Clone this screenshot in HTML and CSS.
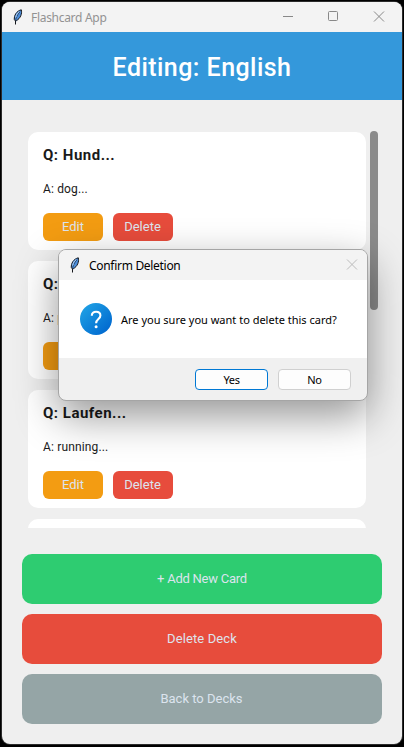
FILE: index.html
```html
<!DOCTYPE html>
<html lang="en">
<head>
<meta charset="utf-8">
<title>Flashcard App</title>
<link rel="stylesheet" href="styles.css">
</head>
<body>
<svg width="0" height="0" class="defs">
  <symbol id="feather" viewBox="0 0 10 16">
    <path d="M2.500 15.500V12L1.300 10.500C1 6.500 3.500 2 8.300.8 9.300 4.500 7.500 9.500 3.300 11.700" fill="#4d8fdc" stroke="#15171c" stroke-width="1"/>
    <path d="M2.600 12C3 8.500 4.500 5.500 7 2.700" fill="none" stroke="#15171c" stroke-width=".6"/>
    <path d="M2.800 8.500C3 6 4.500 3.600 6.200 2.600" fill="none" stroke="#b8d8fa" stroke-width="1"/>
  </symbol>
</svg>
<div class="window">
  <div class="titlebar">
    <svg class="feather"><use href="#feather"/></svg>
    <span class="caption">Flashcard App</span>
    <svg class="controls" width="103" height="12" viewBox="0 0 103 12" fill="none" stroke="#888">
      <path d="M0 5.500H10"/><rect x="45.500" y=".5" width="9" height="9" rx="1"/><path d="M91 .5l10 10M101 .5L91 10.500"/>
    </svg>
  </div>
  <header class="header"><h1>Editing: English</h1></header>
  <main class="list">
    <div class="cards">
      <article class="card">
        <h2>Q: Hund...</h2><p>A: dog...</p>
        <div class="actions"><button class="edit">Edit</button><button class="delete">Delete</button></div>
      </article>
      <article class="card">
        <h2>Q:</h2><p>A: p</p>
        <div class="actions"><button class="edit">Edit</button><button class="delete">Delete</button></div>
      </article>
      <article class="card">
        <h2>Q: Laufen...</h2><p>A: running...</p>
        <div class="actions"><button class="edit">Edit</button><button class="delete">Delete</button></div>
      </article>
      <article class="card"></article>
    </div>
    <div class="thumb"></div>
  </main>
  <footer class="footer">
    <button class="add">+ Add New Card</button>
    <button class="delete">Delete Deck</button>
    <button class="back">Back to Decks</button>
  </footer>
  <div class="dialog">
    <div class="dialog-title">
      <svg class="feather"><use href="#feather"/></svg>
      <span class="caption">Confirm Deletion</span>
      <svg class="close" width="12" height="12" viewBox="0 0 12 12" fill="none" stroke="#bbb"><path d="M1 .5l10 10M11 .5L1 10.500"/></svg>
    </div>
    <div class="dialog-body">
      <svg width="32" height="32" viewBox="0 0 32 32">
        <defs><linearGradient id="q" x1="0" y1="0" x2="1" y2="1"><stop offset=".1" stop-color="#1fa0e4"/><stop offset=".9" stop-color="#0068cf"/></linearGradient></defs>
        <circle cx="16" cy="16" r="16" fill="url(#q)"/>
        <path d="M11.800 12.700C11.800 10.200 13.500 8.800 16.100 8.800S20.400 10.300 20.400 12.500C20.400 16 16.100 16 16.100 20.200" fill="none" stroke="#fff" stroke-width="2.100"/>
        <circle cx="16.100" cy="23.800" r="1.500" fill="#fff"/>
      </svg>
      <span class="message">Are you sure you want to delete this card?</span>
    </div>
    <div class="dialog-actions"><button class="yes">Yes</button><button>No</button></div>
  </div>
</div>
</body>
</html>
```
FILE: styles.css
```css
* { box-sizing: border-box; }
body { margin: 0; background: #000; font-family: Roboto, sans-serif; }
h1, h2, p { margin: 0; }
button { border: 0; padding: 0; font: 13px Roboto, sans-serif; color: #dce4ee; }
.defs { position: absolute; }
.window {
  position: relative; width: 400px; height: 742px; margin: 2px;
  display: flex; flex-direction: column;
  background: #efefef; border-radius: 8px; overflow: hidden;
  box-shadow: 0 0 0 1px #2b2b2b;
}
.titlebar { display: flex; align-items: center; height: 30px; padding: 0 16px 0 11px; background: #f3f3f3; }
.feather { width: 10px; height: 16px; margin-top: -1px; }
.caption { margin-left: 8px; font: 12px "Noto Sans", sans-serif; letter-spacing: -.3px; color: #929292; white-space: nowrap; }
.controls { margin-left: auto; }
.header { display: flex; align-items: center; justify-content: center; height: 68px; background: #3498db; }
.header h1 { color: #fff; font-size: 25px; font-weight: 500; letter-spacing: .45px; line-height: 28px; padding-top: 3px; }
.list { display: flex; align-items: flex-start; flex: 0 0 428px; padding: 32px 0 0 26px; gap: 4px; }
.cards { display: flex; flex-direction: column; gap: 11px; width: 338px; height: 396px; overflow: hidden; }
.card { flex: 0 0 118px; padding: 15px 15px 9px; border-radius: 10px; background: #fff; }
.card h2 { font-size: 15px; line-height: 17px; font-weight: 700; letter-spacing: .5px; color: #1a1a1a; }
.card p { margin-top: 17px; padding-top: 1px; font-size: 12px; line-height: 15px; letter-spacing: .15px; color: #1a1a1a; }
.actions { display: flex; gap: 10px; margin-top: 16px; }
.actions button { width: 60px; height: 28px; padding-bottom: 1px; border-radius: 6px; }
.actions .delete { padding-right: 1px; }
.edit { background: #f39c12; }
.delete { background: #e74c3c; }
.thumb { width: 8px; height: 179px; margin-top: -1px; border-radius: 4px; background: #8b8b8b; }
.footer { display: flex; flex-direction: column; gap: 10px; padding: 26px 20px 0; }
.footer button { height: 50px; padding-bottom: 1px; border-radius: 10px; }
.footer .add { letter-spacing: -.25px; }
.footer .delete { letter-spacing: .1px; }
.footer .back { padding-right: 1px; }
.add { background: #2ecc71; }
.back { background: #95a5a6; }
.dialog {
  position: absolute; left: 56px; top: 247px; width: 310px; height: 152px;
  display: flex; flex-direction: column; border: 1px solid #a5a5a5; border-radius: 8px;
  background: #f0f0f0; overflow: hidden; box-shadow: 0 15px 42px rgba(0,0,0,.42);
}
.dialog-title { display: flex; align-items: center; flex: 0 0 30px; padding: 0 9px 0 11px; background: #f3f3f3; }
.dialog-title .caption { margin-left: 9px; color: #000; }
.close { margin-left: auto; }
.dialog-body { display: flex; align-items: center; flex: 0 0 78px; padding-left: 21px; gap: 9px; background: #fff; }
.message { font: 11px "Noto Sans", sans-serif; color: #000; white-space: nowrap; }
.dialog-actions { display: flex; gap: 10px; padding: 11px 16px 0; justify-content: flex-end; }
.dialog-actions button { width: 73px; height: 21px; border: 1px solid #d0d0d0; border-radius: 4px; background: #fdfdfd; font: 11px "Noto Sans", sans-serif; letter-spacing: -.3px; color: #000; }
.dialog-actions .yes { border-color: #0078d4; }
```
